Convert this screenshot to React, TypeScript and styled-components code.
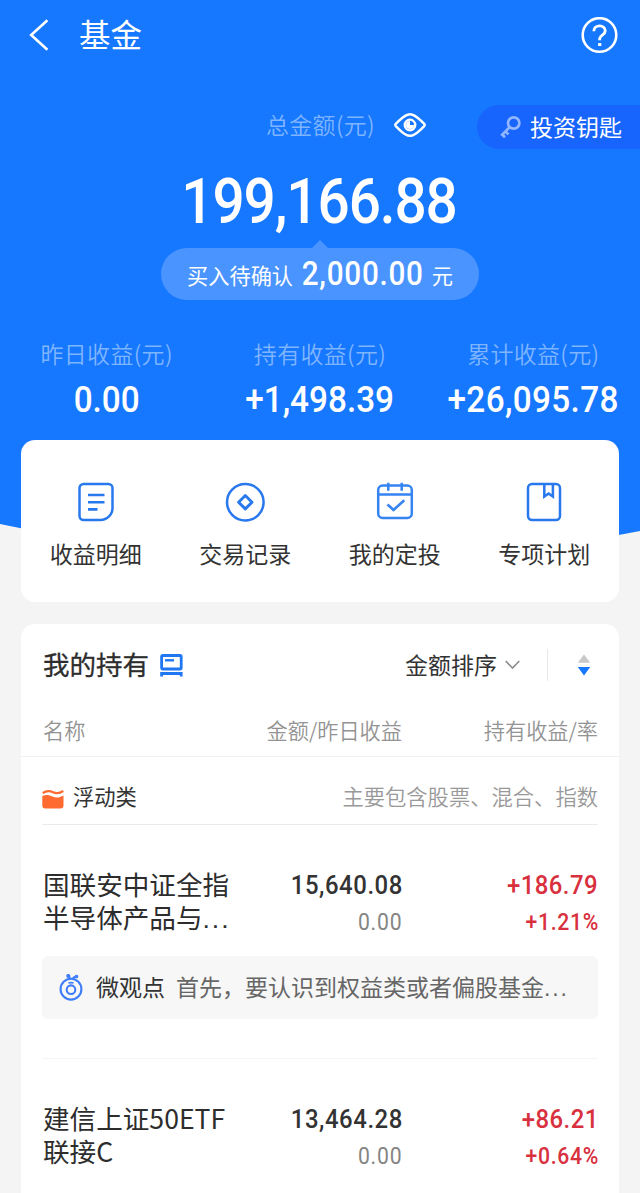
import React from "react";
import styled, { createGlobalStyle } from "styled-components";

const GlobalStyle = createGlobalStyle`
  * { box-sizing: border-box; }
  body {
    margin: 0;
    background: #f4f4f4;
    font-family: "Noto Sans CJK SC", "Noto Sans", sans-serif;
    color: #333;
  }
  svg { display: block; flex: none; }
`;

const Page = styled.main`
  width: 640px;
  height: 1193px;
  overflow: hidden;
  background: #f4f4f4;
`;

const Hero = styled.header`
  height: 590px;
  background: #1677ff;
  color: #fff;
  clip-path: polygon(0 0, 100% 0, 100% 531px, 51% 590px, 0 524px);
`;

const NavBar = styled.div`
  display: flex;
  align-items: center;
  height: 70px;
  padding: 0 22px 0 29px;
`;

const NavTitle = styled.h1`
  flex: 1;
  margin: 0 0 5px 30px;
  font-size: 31.5px;
  line-height: 46px;
  font-weight: 400;
`;

const BalanceRow = styled.div`
  display: flex;
  align-items: center;
  height: 44px;
  margin-top: 35px;
  padding-left: 266px;
`;

const FaintLabel = styled.span<{ $lift?: number }>`
  margin-bottom: ${(p) => p.$lift ?? 0}px;
  font-size: 23px;
  line-height: 34px;
  font-weight: 350;
  letter-spacing: 0.3px;
  color: #7fb5ff;
  white-space: nowrap;
`;

const EyeSlot = styled.span`
  margin: 0 auto 4px 19px;
`;

const KeyButton = styled.div`
  display: flex;
  align-items: center;
  gap: 8px;
  width: 163px;
  height: 44px;
  padding-left: 22px;
  border-radius: 22px 0 0 22px;
  background: #1765fc;
  font-size: 23px;
  white-space: nowrap;
`;

const KeyText = styled.span`
  margin-bottom: 3px;
`;

const Num = styled.span<{
  $size: number;
  $gap?: number;
  $scale?: number;
  $origin?: string;
  $color?: string;
  $weight?: number;
}>`
  display: inline-block;
  font-family: Roboto, "Noto Sans", sans-serif;
  font-size: ${(p) => p.$size}px;
  line-height: 1.2;
  font-weight: ${(p) => p.$weight ?? 500};
  letter-spacing: ${(p) => p.$gap ?? 0}px;
  margin-right: ${(p) => -(p.$gap ?? 0)}px;
  color: ${(p) => p.$color ?? "inherit"};
  white-space: nowrap;
  transform: scaleX(${(p) => p.$scale ?? 0.9});
  transform-origin: ${(p) => p.$origin ?? "center"};
`;

const Total = styled.div`
  display: flex;
  justify-content: center;
  height: 91px;
  padding-top: 15px;
`;

const Pending = styled.div`
  display: flex;
  flex-direction: column;
  align-items: center;
`;

const PendingArrow = styled.i`
  width: 16px;
  height: 8px;
  background: #4a94ff;
  clip-path: polygon(50% 0, 100% 100%, 0 100%);
`;

const PendingPill = styled.div`
  display: flex;
  align-items: center;
  justify-content: center;
  gap: 2px;
  width: 318px;
  height: 52px;
  border-radius: 26px;
  background: #4a94ff;
  font-size: 21.2px;
`;

const Stats = styled.div`
  display: grid;
  grid-template-columns: repeat(3, 1fr);
  margin-top: 36px;
`;

const Stat = styled.div`
  display: flex;
  flex-direction: column;
  align-items: center;
  gap: 8px;
`;

const Card = styled.section`
  margin: 0 21px;
  border-radius: 14px;
  background: #fff;
`;

const Shortcuts = styled(Card)`
  position: relative;
  display: grid;
  grid-template-columns: repeat(4, 1fr);
  height: 162px;
  margin-top: -150px;
`;

const Shortcut = styled.div`
  display: flex;
  flex-direction: column;
  align-items: center;
  padding-top: 42px;
  gap: 14px;
  font-size: 23px;
  line-height: 34px;
`;

const Holdings = styled(Card)`
  height: 620px;
  margin-top: 22px;
`;

const HoldingsHead = styled.div`
  display: flex;
  align-items: center;
  height: 82px;
  padding: 0 28px 0 22px;
`;

const HoldingsTitle = styled.h2`
  margin: 0 11px 2px 0;
  font-size: 26.5px;
  line-height: 38px;
  font-weight: 400;
  color: #2d2d2d;
  -webkit-text-stroke: 0.3px #2d2d2d;
`;

const SortBy = styled.div`
  display: flex;
  align-items: center;
  gap: 8px;
  margin-left: auto;
  font-size: 23px;
`;

const SortText = styled.span`
  margin-bottom: 3px;
`;

const SortRule = styled.i`
  width: 1px;
  height: 32px;
  margin: 0 29px 0 27px;
  background: #e8e8e8;
`;

const columns = "208px 151px 196px";

const ColumnHead = styled.div`
  display: grid;
  grid-template-columns: ${columns};
  height: 51px;
  padding: 8px 22px 0;
  border-bottom: 1px solid #f2f2f2;
  font-size: 21.2px;
  line-height: 32px;
  font-weight: 350;
  color: #939393;
  text-align: right;
  white-space: nowrap;

  span:first-child { text-align: left; }
`;

const Group = styled.div`
  display: flex;
  align-items: center;
  height: 68px;
  margin: 0 21px;
  padding-top: 16px;
  border-bottom: 1px solid #ebebeb;
  font-size: 21.3px;
`;

const GroupName = styled.span`
  margin: 0 0 6px 9px;
`;

const GroupHint = styled.span`
  margin: 0 0 6px auto;
  color: #999;
  font-weight: 350;
`;

const Fund = styled.article`
  margin: 0 21px;
  padding-top: 43px;
`;

const FundRow = styled.div`
  display: grid;
  grid-template-columns: ${columns};
  height: 66px;
  padding-left: 1px;
`;

const FundName = styled.h3`
  margin: 0;
  font-size: 26.6px;
  line-height: 32.5px;
  font-weight: 400;
  color: #2d2d2d;
  white-space: nowrap;
`;

const Dots = styled.span`
  font-family: "Liberation Sans", sans-serif;
  letter-spacing: 1.9px;
`;

const Figures = styled.div`
  display: flex;
  flex-direction: column;
  align-items: flex-end;
  gap: 8px;
  padding-top: 2px;
`;

const Note = styled.div`
  display: flex;
  align-items: center;
  height: 63px;
  margin: 22px 0 39px;
  padding-left: 17px;
  border-radius: 6px;
  background: #f7f7f7;
  font-size: 23px;
  white-space: nowrap;
`;

const NoteTag = styled.span`
  margin: 0 11px 3px 13px;
  color: #333;
`;

const NoteText = styled.span`
  margin-bottom: 3px;
  color: #666;
`;

const FundRule = styled.hr`
  margin: 0;
  height: 1px;
  border: 0;
  background: #f5f5f5;
`;

const RED = "#d9303e";

const BackIcon = () => (
  <svg width="20" height="32" viewBox="0 0 20 32" fill="none" stroke="#fff" strokeWidth="2.6">
    <path d="M18.400 1.200 2.200 16l16.200 14.800" />
  </svg>
);

const HelpIcon = () => (
  <svg width="37" height="37" viewBox="0 0 37 37" fill="none" stroke="#fff" strokeWidth="2.6">
    <circle cx="18.500" cy="18" r="16.800" />
    <path d="M12.800 14.200c0-3.200 2.500-5.300 5.800-5.300s5.600 2.100 5.600 5c0 4-5.500 4.300-5.500 7.700v1.600" strokeWidth="2.900" />
    <path d="M18.700 26v3" strokeWidth="3.200" />
  </svg>
);

const EyeIcon = () => (
  <svg width="32" height="26" viewBox="0 0 32 26" fill="none" stroke="#fff">
    <path d="M2 11.700C6.500 7.500 10.500 2.200 16 2.200S25.500 7.500 30 11.700Q31.300 13 30 14.300C25.500 18.500 21.500 23.800 16 23.800S6.500 18.500 2 14.300Q.7 13 2 11.700Z" strokeWidth="2.500" />
    <circle cx="16" cy="13" r="5.300" strokeWidth="2.300" />
    <path d="M16 9v4h4a4 4 0 1 1-4-4Z" fill="#fff" stroke="none" />
  </svg>
);

const KeyIcon = () => (
  <svg width="23" height="24" viewBox="0 0 23 24" fill="none" stroke="#92b6ff" strokeWidth="2.700">
    <circle cx="14.700" cy="8" r="5.700" />
    <path d="m10.700 12.100-8.500 8.500M6.400 16.400l3 3M3 19.300l3 3" />
  </svg>
);

const DetailIcon = () => (
  <svg width="40" height="40" viewBox="0 0 40 40" fill="none" stroke="#2878ee" strokeWidth="2.500">
    <path d="M7.500 2h25a4 4 0 0 1 4 4v20a12 12 0 0 1-12 12h-17a4 4 0 0 1-4-4V6a4 4 0 0 1 4-4Z" />
    <path d="M12 13h16.500M12 20.200h16.500M12 27.400h9.500" strokeWidth="2.600" />
  </svg>
);

const RecordIcon = () => (
  <svg width="40" height="40" viewBox="0 0 40 40" fill="none" stroke="#2878ee" strokeWidth="2.500">
    <circle cx="20.300" cy="20.200" r="18.300" />
    <path d="m20.300 13.500 6.700 6.700-6.700 6.700-6.700-6.700Z" strokeWidth="2.900" strokeLinejoin="round" />
  </svg>
);

const PlanIcon = () => (
  <svg width="40" height="40" viewBox="0 0 40 40" fill="none" stroke="#3683f2" strokeWidth="2.500">
    <rect x="3.200" y="3.500" width="33.600" height="32.500" rx="4.500" />
    <path d="M3 12.600h34M13.300.8v8M26.700.8v8" />
    <path d="m12.500 22.500 6 5.400 10.800-9.600" strokeWidth="2.600" />
  </svg>
);

const ProjectIcon = () => (
  <svg width="40" height="40" viewBox="0 0 40 40" fill="none" stroke="#2878ee" strokeWidth="2.500">
    <rect x="4" y="2" width="32" height="36" rx="4" />
    <path d="M20.300 2v12.500l4.300-3 4.300 3V2" />
  </svg>
);

const BoardIcon = () => (
  <svg width="23" height="23" viewBox="0 0 23 23" fill="none" stroke="#1f78f2" strokeWidth="2.800">
    <rect x="1.600" y="1.500" width="19.600" height="13.500" rx="1.200" />
    <path d="M5 6.300h9" strokeWidth="2.400" />
    <path d="M1.600 22.500v-3h19.600v3" />
  </svg>
);

const WaveIcon = () => (
  <svg width="22" height="20" viewBox="0 0 22 20" fill="#ff6a30">
    <path d="M.3 7C4 5.300 7 5.800 10.500 7.500s7 1.200 11-1v10a3 3 0 0 1-3 3H3.300a3 3 0 0 1-3-3Z" />
    <path d="M.8 4.200C4.500 1.200 7.700 1.600 11 3.200s6.200 1.400 10.300-1.200" fill="none" stroke="#ff6a30" strokeWidth="2.300" />
  </svg>
);

const ChevronIcon = () => (
  <svg width="15" height="10" viewBox="0 0 15 10" fill="none" stroke="#8f8f8f" strokeWidth="1.700">
    <path d="m.7 1 6.800 7 6.800-7" />
  </svg>
);

const SortIcon = () => (
  <svg width="14" height="22" viewBox="0 0 14 22">
    <path d="M7 .5 13.200 8.700H.8Z" fill="#c8c8c8" />
    <path d="M7 21.500 13.200 13H.8Z" fill="#1677ff" />
  </svg>
);

const MedalIcon = () => (
  <svg width="24" height="27" viewBox="0 0 24 27" fill="none" stroke="#3d7dfa" strokeWidth="2.100">
    <circle cx="12" cy="15.200" r="10.400" />
    <circle cx="12" cy="15.700" r="4.300" />
    <path d="M9.400 9.100q2.600-.9 5.200 0" strokeWidth="1.600" />
    <path d="M11 5Q10.800 3 9 1.500M13.500 5q1-2 4-2.500" />
    <circle cx="9.300" cy="2" r="1" />
    <circle cx="17.500" cy="2.500" r=".8" />
  </svg>
);

const stats = [
  { label: "昨日收益(元)", value: "0.00", gap: 0 },
  { label: "持有收益(元)", value: "+1,498.39", gap: 0 },
  { label: "累计收益(元)", value: "+26,095.78", gap: 0.4 },
];

const shortcuts = [
  { label: "收益明细", Icon: DetailIcon },
  { label: "交易记录", Icon: RecordIcon },
  { label: "我的定投", Icon: PlanIcon },
  { label: "专项计划", Icon: ProjectIcon },
];

interface FundInfo {
  name: React.ReactNode;
  amount: string;
  daily: string;
  gain: string;
  rate: string;
}

const Figure = styled(Num).attrs({ $scale: 0.92, $origin: "right" })``;

const FundSummary = ({ name, amount, daily, gain, rate }: FundInfo) => (
  <FundRow>
    <FundName>{name}</FundName>
    <Figures>
      <Figure $size={26} $gap={0.6}>{amount}</Figure>
      <Figure $size={23} $gap={0.9} $weight={400} $color="#858585">{daily}</Figure>
    </Figures>
    <Figures>
      <Figure $size={26} $gap={0.5} $color={RED}>{gain}</Figure>
      <Figure $size={23} $gap={0.8} $color={RED}>{rate}</Figure>
    </Figures>
  </FundRow>
);

export default function App() {
  return (
    <Page>
      <GlobalStyle />
      <Hero>
        <NavBar>
          <BackIcon />
          <NavTitle>基金</NavTitle>
          <HelpIcon />
        </NavBar>
        <BalanceRow>
          <FaintLabel $lift={6}>总金额(元)</FaintLabel>
          <EyeSlot><EyeIcon /></EyeSlot>
          <KeyButton><KeyIcon /><KeyText>投资钥匙</KeyText></KeyButton>
        </BalanceRow>
        <Total><Num $size={63} $gap={-1.2}>199,166.88</Num></Total>
        <Pending>
          <PendingArrow />
          <PendingPill>
            <span>买入待确认</span>
            <Num $size={33} $gap={0.8}>2,000.00</Num>
            <span>元</span>
          </PendingPill>
        </Pending>
        <Stats>
          {stats.map((s) => (
            <Stat key={s.label}>
              <FaintLabel>{s.label}</FaintLabel>
              <Num $size={37} $gap={s.gap}>{s.value}</Num>
            </Stat>
          ))}
        </Stats>
      </Hero>

      <Shortcuts>
        {shortcuts.map(({ label, Icon }) => (
          <Shortcut key={label}>
            <Icon />
            {label}
          </Shortcut>
        ))}
      </Shortcuts>

      <Holdings>
        <HoldingsHead>
          <HoldingsTitle>我的持有</HoldingsTitle>
          <BoardIcon />
          <SortBy><SortText>金额排序</SortText><ChevronIcon /></SortBy>
          <SortRule />
          <SortIcon />
        </HoldingsHead>
        <ColumnHead>
          <span>名称</span>
          <span>金额/昨日收益</span>
          <span>持有收益/率</span>
        </ColumnHead>
        <Group>
          <WaveIcon />
          <GroupName>浮动类</GroupName>
          <GroupHint>主要包含股票、混合、指数</GroupHint>
        </Group>
        <Fund>
          <FundSummary
            name={<>国联安中证全指<br />半导体产品与<Dots>...</Dots></>}
            amount="15,640.08"
            daily="0.00"
            gain="+186.79"
            rate="+1.21%"
          />
          <Note>
            <MedalIcon />
            <NoteTag>微观点</NoteTag>
            <NoteText>首先，要认识到权益类或者偏股基金<Dots>...</Dots></NoteText>
          </Note>
          <FundRule />
        </Fund>
        <Fund>
          <FundSummary
            name={<>建信上证50ETF<br />联接C</>}
            amount="13,464.28"
            daily="0.00"
            gain="+86.21"
            rate="+0.64%"
          />
        </Fund>
      </Holdings>
    </Page>
  );
}
